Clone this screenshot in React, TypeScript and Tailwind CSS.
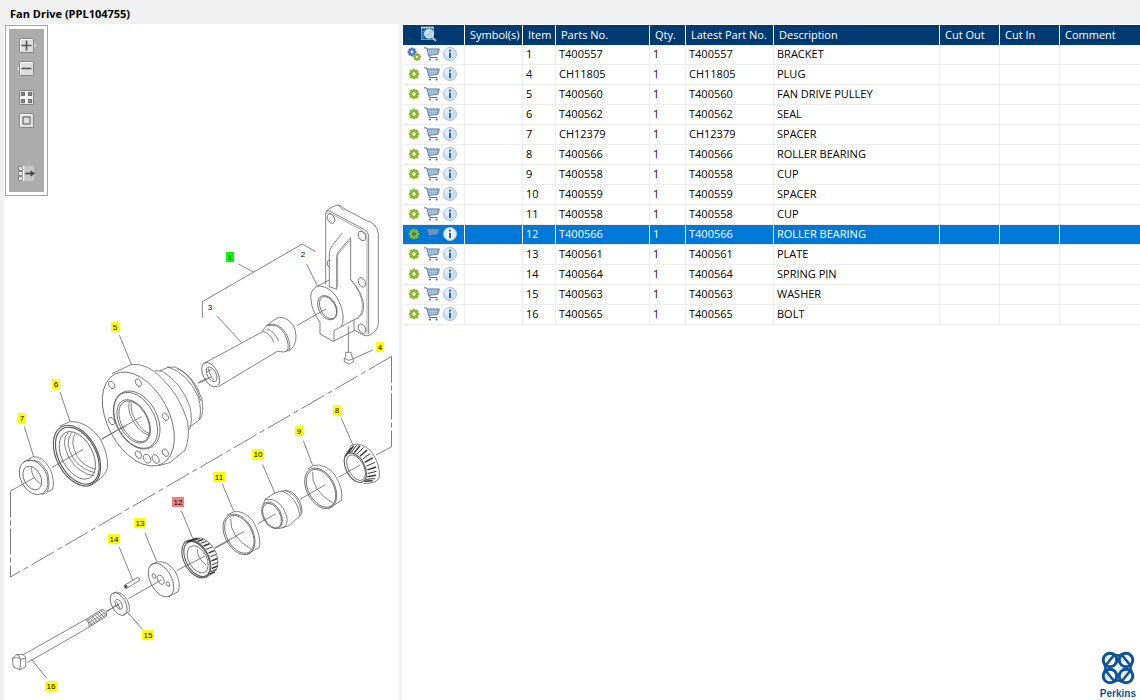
import { useState } from "react";
import type { ReactNode } from "react";

interface Part {
  item: string;
  partNo: string;
  qty: number;
  description: string;
  assembly?: boolean;
}

const parts: Part[] = [
  { item: "1", partNo: "T400557", qty: 1, description: "BRACKET", assembly: true },
  { item: "4", partNo: "CH11805", qty: 1, description: "PLUG" },
  { item: "5", partNo: "T400560", qty: 1, description: "FAN DRIVE PULLEY" },
  { item: "6", partNo: "T400562", qty: 1, description: "SEAL" },
  { item: "7", partNo: "CH12379", qty: 1, description: "SPACER" },
  { item: "8", partNo: "T400566", qty: 1, description: "ROLLER BEARING" },
  { item: "9", partNo: "T400558", qty: 1, description: "CUP" },
  { item: "10", partNo: "T400559", qty: 1, description: "SPACER" },
  { item: "11", partNo: "T400558", qty: 1, description: "CUP" },
  { item: "12", partNo: "T400566", qty: 1, description: "ROLLER BEARING" },
  { item: "13", partNo: "T400561", qty: 1, description: "PLATE" },
  { item: "14", partNo: "T400564", qty: 1, description: "SPRING PIN" },
  { item: "15", partNo: "T400563", qty: 1, description: "WASHER" },
  { item: "16", partNo: "T400565", qty: 1, description: "BOLT" },
];

const callouts = [
  { item: "1", x: 230, y: 257 },
  { item: "2", x: 303, y: 254 },
  { item: "3", x: 210, y: 307 },
  { item: "4", x: 380, y: 347 },
  { item: "5", x: 115, y: 327 },
  { item: "6", x: 56, y: 384 },
  { item: "7", x: 22, y: 418 },
  { item: "8", x: 337, y: 410 },
  { item: "9", x: 299, y: 431 },
  { item: "10", x: 258, y: 454 },
  { item: "11", x: 219, y: 477 },
  { item: "12", x: 178, y: 502 },
  { item: "13", x: 140, y: 523 },
  { item: "14", x: 114, y: 539 },
  { item: "15", x: 148, y: 635 },
  { item: "16", x: 51, y: 686 },
];

const calloutFill = (item: string, selected: string) => {
  if (item === "2" || item === "3") return "none";
  if (item === selected) return "#f08080";
  return item === "1" ? "#00ff00" : "#ffff00";
};

/* ---------- icons ---------- */

function GearShape({ cx, cy, r, color }: { cx: number; cy: number; r: number; color: string }) {
  return (
    <g>
      {[0, 45, 90, 135].map((a) => (
        <rect
          key={a}
          x={cx - r * 0.26}
          y={cy - r}
          width={r * 0.52}
          height={r * 2}
          fill={color}
          transform={`rotate(${a} ${cx} ${cy})`}
        />
      ))}
      <circle cx={cx} cy={cy} r={r * 0.56} fill="none" stroke={color} strokeWidth={r * 0.42} />
      <circle cx={cx} cy={cy} r={r * 0.32} fill="#fff" />
    </g>
  );
}

function GearIcon({ assembly, selected }: { assembly?: boolean; selected: boolean }) {
  return (
    <svg width="14" height="14" viewBox="0 0 14 14" className="shrink-0" aria-hidden="true">
      {assembly ? (
        <>
          <GearShape cx={5} cy={5} r={4.4} color="#3f74d1" />
          <GearShape cx={10} cy={10} r={3.8} color="#8ab61f" />
        </>
      ) : (
        <GearShape cx={7} cy={7} r={5.2} color="#8ab82a" />
      )}
      {selected && <circle cx="7" cy="7" r="1.8" fill="#0078d7" stroke="#5b8f12" strokeWidth="0.8" />}
    </svg>
  );
}

function CartIcon({ selected }: { selected: boolean }) {
  return (
    <svg width="16" height="14" viewBox="0 0 16 14" fill="none" aria-hidden="true">
      <path d="M3.5 2H15.2L13.6 7.2 5 8.2Z" fill={selected ? "#5f9bd6" : "#e3ebf5"} />
      <path d="M0 .9H2.6L5.4 10.5H13.4M3 2H15.4L13.6 7.3 4.8 8.3" stroke="#4f76a8" />
      <path d="M5.7 2V8M7.7 2V8M9.7 2V7.8M11.7 2V7.5M13.5 2V7.2M3.6 3.8H14.8M4.2 5.7H14.2" stroke="#6f90bb" strokeWidth=".6" />
      <circle cx="6" cy="12.5" r="1.1" fill="#4470b5" />
      <circle cx="12.6" cy="12.5" r="1.1" fill="#4470b5" />
    </svg>
  );
}

function InfoIcon({ selected }: { selected: boolean }) {
  return (
    <svg width="14" height="14" viewBox="0 0 14 14" aria-hidden="true">
      <circle cx="7" cy="7" r="6.5" fill={selected ? "#e4f0fa" : "#c9dff0"} stroke="#a6c5de" />
      <circle cx="5.6" cy="5" r="3.8" fill="#fff" opacity=".45" />
      <circle cx="7" cy="3.7" r="1.1" fill="#3a6398" />
      <rect x="6" y="5.7" width="2" height="5.3" fill="#3a6398" />
    </svg>
  );
}

function PreviewIcon() {
  return (
    <svg width="18" height="18" viewBox="0 0 18 18" fill="none" className="block" aria-hidden="true">
      <rect x="1.5" y="2.5" width="12" height="12" fill="#1b5b8c" stroke="#5f9cc4" />
      <path d="M1 2.5H14" stroke="#e8f4fb" strokeWidth="2" strokeDasharray="1 .6" />
      <path d="M3 6V13" stroke="#8fbfe0" strokeDasharray="1 1" />
      <path d="M12 12L16 16" stroke="#9fb8cc" strokeWidth="2.2" />
      <circle cx="9" cy="8.8" r="4.3" fill="#b5d3e8" stroke="#e4eef6" strokeWidth="1.2" />
      <path d="M6.8 8.6Q7.2 6.8 9 6.5" stroke="#fff" />
    </svg>
  );
}

function Face() {
  return <rect x="2.5" y="1.5" width="14" height="14" rx=".8" fill="#dedede" stroke="#858585" />;
}

function ToolButton({ label, children }: { label: string; children: ReactNode }) {
  return (
    <button type="button" aria-label={label} className="block">
      <svg width="19" height="17" viewBox="0 0 19 17" fill="none" className="block">
        {children}
      </svg>
    </button>
  );
}

function Toolbar() {
  return (
    <div className="absolute left-px top-px border border-[#a5a5a5] bg-white p-[3px]">
      <div className="flex flex-col items-center bg-[#acacac] px-2 pb-2.5 pt-2">
        <ToolButton label="Zoom in">
          <Face />
          <path d="M17 6L19 8.5 17 11Z" fill="#dedede" />
          <path d="M3.5 14.5V2.5H15.5" stroke="#fafafa" />
          <path d="M4.5 8.5H14.5M9.5 3.5V13.5" stroke="#555" strokeWidth="1.6" />
        </ToolButton>
        <div className="mt-1.5">
          <ToolButton label="Zoom out">
            <Face />
            <path d="M2 6L0 8.5 2 11Z" fill="#dedede" />
            <path d="M3.5 14.5V2.5H15.5" stroke="#fafafa" />
            <path d="M4.5 8.5H14.5" stroke="#555" strokeWidth="1.6" />
          </ToolButton>
        </div>
        <div className="mt-3">
          <ToolButton label="Show all">
            <Face />
            <path d="M9.5 2V15M3 8.5H16" stroke="#fafafa" strokeWidth="2" />
            <path d="M4.5 3.5h3v3h-3zM11.5 3.5h3v3h-3zM4.5 10.5h3v3h-3zM11.5 10.5h3v3h-3z" fill="#8e8e8e" stroke="#666" />
          </ToolButton>
        </div>
        <div className="mt-1.5">
          <ToolButton label="Fit to window">
            <Face />
            <path d="M3.5 14.5V2.5H15.5" stroke="#fafafa" />
            <path d="M6 5h7v7H6z" stroke="#555" />
          </ToolButton>
        </div>
        <div className="mt-9">
          <ToolButton label="Toggle parts list">
            <path d="M7 1H17V16H7Z" fill="#c6c6c6" />
            <path d="M1.5 1.5h4v4h-4zM1.5 6.5h4v4h-4zM1.5 11.5h4v4h-4z" fill="#e4e4e4" stroke="#858585" />
            <path d="M6.5 1V16" stroke="#fff" strokeWidth="1.4" />
            <path d="M8 8.5H15" stroke="#444" strokeWidth="1.6" />
            <path d="M13.5 5.2L17.8 8.5 13.5 11.8Z" fill="#444" />
          </ToolButton>
        </div>
      </div>
    </div>
  );
}

/* ---------- exploded view ---------- */

function Ring({ cx, cy, a, b, bold }: { cx: number; cy: number; a: number; b: number; bold?: boolean }) {
  return (
    <ellipse cx={cx} cy={cy} rx={a} ry={b} transform={`rotate(-28 ${cx} ${cy})`} strokeWidth={bold ? 3.4 : undefined} />
  );
}

// Parts are drafted at three times their printed size
function Sheet({ x, y, children }: { x: number; y: number; children: ReactNode }) {
  return <g transform={`translate(${x} ${y}) scale(0.33333)`}>{children}</g>;
}

function onRing(cx: number, cy: number, a: number, b: number, deg: number) {
  const t = (deg * Math.PI) / 180;
  const r = (-28 * Math.PI) / 180;
  const x = a * Math.cos(t);
  const y = b * Math.sin(t);
  return [cx + x * Math.cos(r) - y * Math.sin(r), cy + x * Math.sin(r) + y * Math.cos(r)];
}

interface RollersProps {
  inner: [number, number, number, number];
  outer: [number, number, number, number];
  from: number;
  to: number;
}

function Rollers({ inner, outer, from, to }: RollersProps) {
  const count = 15;
  return (
    <>
      {Array.from({ length: count }, (_, i) => {
        const deg = from + ((to - from) * i) / (count - 1);
        const [x1, y1] = onRing(...inner, deg);
        const [x2, y2] = onRing(...outer, deg);
        return <line key={i} x1={x1} y1={y1} x2={x2} y2={y2} stroke="#333" strokeWidth={i % 2 ? 3 : 4.4} />;
      })}
    </>
  );
}

function ExplodedView({ selected, onSelect }: { selected: string; onSelect: (item: string) => void }) {
  return (
    <svg viewBox="4 24 395 676" className="block h-auto w-full" role="img" aria-label="Fan Drive exploded view">
      <g fill="none" stroke="#5c5c5c" strokeWidth="2.3" strokeLinejoin="round">
        {/* centre lines that link the two rows */}
        <path d="M391.5 356.5L10.5 577" strokeWidth=".8" strokeDasharray="26 4 5 4" />
        <path d="M391.5 356.5V446.5M10.5 491.5V577" strokeWidth=".8" strokeDasharray="26 3 5 3" />

        {/* bracket, tube and plug */}
        <Sheet x={190} y={190}>
          <path d="M407 283V72Q409 58 420 64L522 118Q536 126 536 142V432" />
          <path d="M411 72Q414 66 424 72L518 122Q530 130 531 142V430" strokeWidth="1.6" />
          <path d="M408 66Q420 50 445 45 455 46 462 56L530 92Q560 98 565 132V400Q564 420 545 432 533 440 525 437L492 420" />
          <path d="M445 45Q452 52 462 62" />
          <Ring cx={423} cy={86} a={10} b={15} />
          <Ring cx={516} cy={138} a={10} b={15} />
          <Ring cx={516} cy={277} a={10} b={15} />
          <Ring cx={516} cy={416} a={10} b={15} />
          <path d="M418 208Q411 212 412 222 413 230 418 232" />
          <path d="M457 129L427 166Q418 178 418 192V290L440 298V200Q440 192 446 184L482 143V268Q518 310 521 345 522 372 505 384L490 390 432 422V454" />
          <path d="M443 292V200Q443 194 449 187L480 152" strokeWidth="1.6" />
          <path d="M482 268Q515 308 517 345 518 370 504 382" strokeWidth="1.6" />
          <path d="M383 288L418 270M362 322Q363 292 388 288 430 290 452 345 466 385 454 410M362 322Q362 350 380 382L390 396V432L430 454 492 422V390" />
          <Ring cx={412} cy={353} a={26} b={39} />
          <Ring cx={414} cy={353} a={22} b={36} />
          <path d="M320 407L408 357" />
          <path d="M475 410V486M467 487H483L486 500 490 506V515L478 522 463 516V505L467 500ZM463 505L476 511 490 506M490 506L548 480" />
          <path d="M145 222L191 246M37 383V335L337 162 377 185M350 222L382 288M80 377L154 457" />
          <path d="M42 520L220 424M85 590L262 484" />
          <Ring cx={62} cy={554} a={22} b={40} />
          <Ring cx={65} cy={553} a={13} b={24} />
          <path d="M55 535Q60 560 72 570M50 545L65 538" />
          <path d="M218 424Q228 400 268 382 300 382 315 418 326 460 300 480L282 486 262 484M230 408Q262 396 284 432 302 470 290 484M234 404Q268 396 289 432 306 466 296 482M218 424Q240 428 252 458M230 416Q255 424 266 454" />
          <path d="M25 580L65 560" />
        </Sheet>

        {/* pulley */}
        <Sheet x={90} y={310}>
          <Ring cx={145} cy={327} a={92} b={152} />
          <path d="M66 191L125 163Q175 160 218 207 268 255 293 335 300 385 285 420L240 458 205 467" />
          <path d="M195 182L218 184Q275 220 300 290 308 330 300 355L295 362M210 182Q235 168 255 171 310 192 335 265 344 305 330 328L298 352M232 170Q295 190 325 262 336 300 328 328M264 176Q312 200 332 272" />
          <Ring cx={140} cy={330} a={62} b={93} />
          <Ring cx={137} cy={331} a={57} b={90} />
          <Ring cx={131} cy={334} a={43} b={70} />
          <Ring cx={133} cy={334} a={39} b={66} />
          <path d="M118 275Q108 310 145 355 160 372 180 377M124 280Q118 310 150 350 165 368 180 371" />
          <Ring cx={65} cy={225} a={8} b={12} />
          <Ring cx={145} cy={218} a={8} b={12} />
          <Ring cx={226} cy={320} a={8} b={12} />
          <Ring cx={65} cy={333} a={8} b={12} />
          <Ring cx={145} cy={434} a={8} b={12} />
          <Ring cx={171} cy={446} a={10} b={14} />
          <Ring cx={197} cy={447} a={9} b={14} />
          <Ring cx={226} cy={428} a={8} b={12} />
          <path d="M88 75L124 163M35 387L155 320M325 218L352 204" />
        </Sheet>

        {/* seal and spacer */}
        <Sheet x={0} y={370}>
          <Ring cx={231} cy={257} a={61} b={98} bold />
          <Ring cx={232} cy={257} a={56} b={92} bold />
          <Ring cx={232} cy={256} a={46} b={77} />
          <path d="M205 187Q180 210 208 265 235 310 283 318M215 187Q192 220 220 265 245 300 285 308M226 190Q208 215 232 260 252 290 287 298" />
          <path d="M180 168L212 154Q260 154 298 202 325 250 323 292 320 310 300 328L265 347" />
          <path d="M180 66L210 154M155 293L250 238M305 208L350 182M358 178L378 168" />
          <Ring cx={101} cy={322} a={39} b={55} />
          <Ring cx={97} cy={324} a={25} b={38} />
          <path d="M70 277L100 260Q130 258 152 300 165 335 158 358L125 374M84 273Q120 262 142 306 152 340 142 366M95 292Q92 320 122 342" />
          <path d="M73 170L101 260M32 363L105 322" />
        </Sheet>

        {/* bearing, cups and spacer of the second row */}
        <Sheet x={210} y={390}>
          <Ring cx={87} cy={433} a={42} b={65} />
          <Ring cx={88} cy={433} a={38} b={61} />
          <path d="M50 376L72 365Q103 360 130 395 155 440 148 472L110 494M62 385Q58 440 125 478" />
          <Ring cx={186} cy={376} a={27} b={43} />
          <Ring cx={186} cy={377} a={24} b={40} />
          <path d="M160 344L165 328 195 309Q225 298 245 305 276 330 276 365L272 376 235 408 205 416M165 328Q212 322 230 378 236 405 218 415M215 302Q262 320 270 378M225 300Q270 318 274 370" />
          <Ring cx={332} cy={295} a={42} b={65} />
          <Ring cx={333} cy={295} a={38} b={61} />
          <path d="M292 238L310 226Q348 220 375 255 402 300 394 332L355 355M308 245Q302 300 370 340" />
          <Ring cx={436} cy={233} a={28} b={48} bold />
          <Ring cx={438} cy={233} a={23} b={42} />
          <path d="M425 165Q450 154 482 182 512 222 508 262 502 280 462 281" />
          <Rollers inner={[438, 232, 30, 49]} outer={[457, 221, 36, 60]} from={-115} to={85} />
          <path d="M405 200L425 165" />
          <path d="M37 282L71 363M158 224L195 310M280 152L308 226M394 85L428 163" />
          <path d="M15 473L103 424M143 401L197 372M270 328L345 285M385 262L450 225M498 195L545 170" />
        </Sheet>

        {/* bearing, plate, pin and washer */}
        <Sheet x={100} y={480}>
          <Ring cx={289} cy={237} a={37} b={61} bold />
          <Ring cx={291} cy={237} a={33} b={57} bold />
          <Ring cx={293} cy={238} a={27} b={44} />
          <path d="M278 177L305 174Q335 185 350 222 358 255 348 270L318 294M292 208Q292 235 318 255" />
          <Rollers inner={[293, 236, 37, 60]} outer={[309, 230, 39, 59]} from={-100} to={75} />
          <path d="M244 92L278 175M230 272L315 228M345 205L390 181" />
          <Ring cx={183} cy={300} a={32} b={55} />
          <path d="M152 256L170 246Q203 240 226 275 244 310 235 335L205 350" />
          <Ring cx={162} cy={288} a={5} b={7} />
          <Ring cx={204} cy={312} a={5} b={7} />
          <Ring cx={182} cy={299} a={9} b={15} />
          <path d="M135 160L170 244M85 356L185 300" />
          <path d="M74 315L112 293Q120 292 119 301L80 325Q72 325 74 315ZM78 314Q84 318 80 325M58 202L98 300" />
          <ellipse cx="77" cy="320" rx="3" ry="4" fill="#333" />
          <Ring cx={56} cy={372} a={21} b={37} />
          <Ring cx={56} cy={373} a={9} b={16} />
          <path d="M38 341L50 336Q80 342 88 378V394L70 406M50 366L60 386M84 398L127 448M20 395L55 373" />
        </Sheet>

        {/* bolt */}
        <Sheet x={0} y={570}>
          <path d="M70 254L258 148 306 118Q322 124 320 138L268 171 82 278M258 148Q268 156 268 171" />
          <path d="M264 148L276 166M270 143L284 161M277 139L292 156M284 135L300 151M290 130L306 146M297 126L313 142M303 121L318 136" />
          <path d="M260 152L308 122M264 160L316 128M267 167L319 134" strokeWidth="1.8" />
          <path d="M37 266L50 254 68 253 77 262V290L60 299 40 291ZM50 254Q58 256 62 268L77 264M62 268L60 299M38 268Q48 258 62 268" />
          <path d="M95 268L140 325M318 124L332 116M338 112L358 102" />
        </Sheet>
      </g>

      {callouts.map((c) => {
        const width = c.item.length > 1 ? 12 : 8;
        return (
          <g key={c.item} className="cursor-pointer" onClick={() => onSelect(c.item)}>
            <rect x={c.x - width / 2} y={c.y - 5} width={width} height="10" fill={calloutFill(c.item, selected)} />
            <text
              x={c.x}
              y={c.y + 3}
              textAnchor="middle"
              fill="#000"
              className="font-['Liberation_Sans',Arial,sans-serif] text-[8px]"
            >
              {c.item}
            </text>
          </g>
        );
      })}
    </svg>
  );
}

/* ---------- parts list ---------- */

const head = "h-5 whitespace-nowrap border-r border-white p-0 pb-0.5 pl-[5px] text-left font-normal";

function PartsTable({ selected, onSelect }: { selected: string; onSelect: (item: string) => void }) {
  return (
    <table className="w-full table-fixed border-separate border-spacing-0 text-[11px] leading-[17px]">
      <colgroup>
        <col className="w-[62px]" />
        <col className="w-[58px]" />
        <col className="w-[33px]" />
        <col className="w-[94px]" />
        <col className="w-9" />
        <col className="w-[88px]" />
        <col className="w-[166px]" />
        <col className="w-15" />
        <col className="w-15" />
        <col />
      </colgroup>
      <thead className="bg-[#003a73] text-white">
        <tr>
          <th className="h-5 border-r border-white p-0 pb-0.5 pl-[17px]">
            <button type="button" aria-label="Preview" className="block">
              <PreviewIcon />
            </button>
          </th>
          <th className={head}>Symbol(s)</th>
          <th className={head}>Item</th>
          <th className={head}>Parts No.</th>
          <th className={head}>Qty.</th>
          <th className={head}>Latest Part No.</th>
          <th className={head}>Description</th>
          <th className={head}>Cut Out</th>
          <th className={head}>Cut In</th>
          <th className="h-5 p-0 pb-0.5 pl-[5px] text-left font-normal">Comment</th>
        </tr>
      </thead>
      <tbody>
        {parts.map((part) => {
          const active = part.item === selected;
          const cell = "h-5 whitespace-nowrap border-b border-r border-[#ededed] p-0 pb-0.5 pl-[3px]";
          return (
            <tr
              key={part.item}
              onClick={() => onSelect(part.item)}
              className={active ? "cursor-default bg-[#0078d7] text-white" : "cursor-default text-black"}
            >
              <td className="h-5 border-b border-r border-[#ededed] p-0 pb-0.5 pl-1">
                <div className="flex items-center">
                  <GearIcon assembly={part.assembly} selected={active} />
                  <button type="button" aria-label={`Add ${part.partNo} to cart`} className="ml-[3px]">
                    <CartIcon selected={active} />
                  </button>
                  <button type="button" aria-label={`Details of ${part.partNo}`} className="ml-[3px]">
                    <InfoIcon selected={active} />
                  </button>
                </div>
              </td>
              <td className={cell} />
              <td className={cell}>{part.item}</td>
              <td className={cell}>{part.partNo}</td>
              <td className={active ? cell : `${cell} text-[#300030]`}>{part.qty}</td>
              <td className={cell}>{part.partNo}</td>
              <td className={cell}>{part.description}</td>
              <td className={cell} />
              <td className={cell} />
              <td className="h-5 border-b border-[#ededed] p-0" />
            </tr>
          );
        })}
      </tbody>
    </table>
  );
}

function PerkinsLogo() {
  return (
    <div className="flex flex-col items-center self-end pr-1 text-[#0a5599]">
      <svg
        width="36"
        height="36"
        viewBox="0 0 36 36"
        fill="none"
        stroke="currentColor"
        strokeWidth="3"
        className="mb-0.5"
        aria-hidden="true"
      >
        <circle cx="10" cy="10" r="6.8" />
        <circle cx="26" cy="10" r="6.8" />
        <circle cx="10" cy="26" r="6.8" />
        <circle cx="26" cy="26" r="6.8" />
        <path d="M6 15L14 5M30 15L22 5M6 21L14 31M30 21L22 31" strokeWidth="2.6" />
        <path d="M14 4Q18 7 22 4M14 32Q18 29 22 32M4 14Q7 18 4 22M32 14Q29 18 32 22" strokeWidth="2.4" />
      </svg>
      <span className="font-['Liberation_Sans',Arial,sans-serif] text-[10px] font-bold leading-3">Perkins</span>
    </div>
  );
}

export default function App() {
  const [selected, setSelected] = useState("12");

  return (
    <div className="flex h-screen flex-col overflow-hidden bg-[#f0f0f0] font-['Open_Sans','Noto_Sans',sans-serif]">
      <h1 className="h-6 shrink-0 pl-2.5 pt-1 text-[11px] font-bold leading-5 text-black">Fan Drive (PPL104755)</h1>

      <div className="flex min-h-0 flex-1">
        <section className="w-[35%] shrink-0 pl-1">
          <div className="relative h-full bg-white">
            <ExplodedView selected={selected} onSelect={setSelected} />
            <Toolbar />
          </div>
        </section>

        <section className="ml-[3px] flex min-w-0 flex-1 flex-col justify-between bg-white pl-px pt-px">
          <PartsTable selected={selected} onSelect={setSelected} />
          <PerkinsLogo />
        </section>
      </div>
    </div>
  );
}
